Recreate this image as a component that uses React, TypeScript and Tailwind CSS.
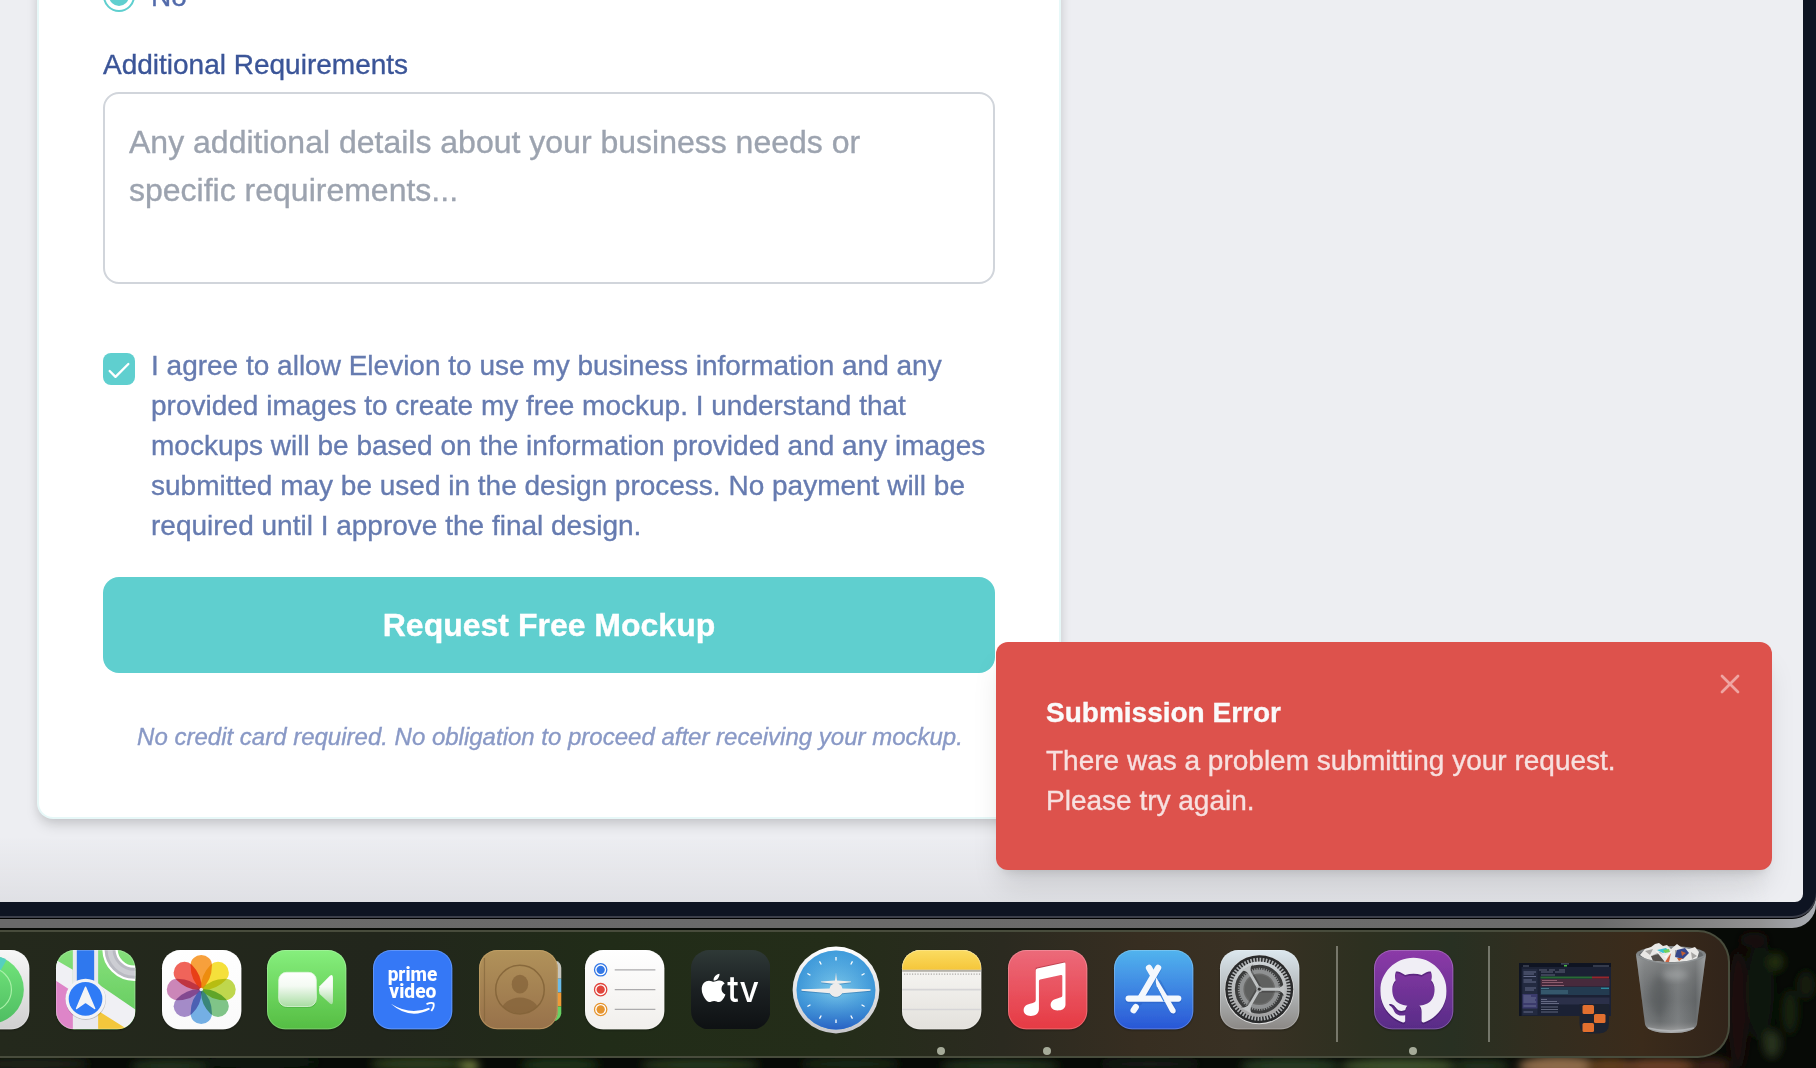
import React from "react";
import { FaApple } from "react-icons/fa";
import { SiGithub } from "react-icons/si";
import { Check, X } from "lucide-react";

const range = (n: number) => Array.from({ length: n }, (_, i) => i);

function Wallpaper() {
  const blobs: [number, number, number, number, string][] = [
    [30, 1064, 60, 8, "#1c2016"], [170, 1066, 40, 7, "#20301c"], [260, 1062, 60, 6, "#0f1a10"],
    [420, 1064, 50, 8, "#2a3a1c"], [470, 1066, 9, 6, "#6f7a3c"], [560, 1065, 40, 8, "#1b3318"],
    [700, 1065, 60, 7, "#25381f"], [850, 1064, 50, 6, "#1a2a17"], [1000, 1066, 60, 7, "#23301c"],
    [1150, 1064, 50, 6, "#141d12"], [1290, 1066, 50, 8, "#253a22"], [1400, 1066, 60, 8, "#3c4f2c"],
    [1480, 1066, 30, 7, "#22301a"], [1560, 1066, 42, 10, "#8d6b48"], [1610, 1066, 24, 9, "#5e3c1f"],
    [1660, 1066, 40, 8, "#6b4128"], [1710, 1066, 20, 8, "#3a2415"], [1738, 1010, 10, 60, "#1e0f0a"],
    [1760, 990, 14, 50, "#0f150b"], [1776, 962, 8, 9, "#222e0f"], [1772, 1044, 9, 14, "#26321a"],
    [1790, 1012, 8, 22, "#18240e"], [1806, 985, 9, 14, "#121a0b"], [1754, 940, 14, 8, "#150d09"],
  ];
  return (
    <svg className="absolute inset-0" width="1816" height="1068" aria-hidden="true">
      <defs>
        <filter id="soft" x="-30%" y="-30%" width="160%" height="160%"><feGaussianBlur stdDeviation="4" /></filter>
      </defs>
      <rect width="1816" height="1068" fill="#070a06" />
      <g filter="url(#soft)">
        {blobs.map(([x, y, rx, ry, c], i) => <ellipse key={i} cx={x} cy={y} rx={rx} ry={ry} fill={c} />)}
      </g>
    </svg>
  );
}

function Icon({ id, from, to, children }: { id: string; from: string; to: string; children?: React.ReactNode }) {
  return (
    <svg viewBox="0 0 80 80" className="h-[79.3px] w-[79.3px] shrink-0 overflow-visible">
      <defs>
        <linearGradient id={`g-${id}`} x2="0" y2="1"><stop stopColor={from} /><stop offset="1" stopColor={to} /></linearGradient>
        <clipPath id={`c-${id}`}><rect width="80" height="80" rx="18.5" /></clipPath>
        <filter id={`s-${id}`} x="-20%" y="-20%" width="140%" height="150%"><feDropShadow dx="0" dy="1" stdDeviation="1.2" floodOpacity=".35" /></filter>
      </defs>
      <rect width="80" height="80" rx="18.5" fill={`url(#g-${id})`} filter={`url(#s-${id})`} />
      <g clipPath={`url(#c-${id})`}>{children}</g>
      <rect x=".5" y=".5" width="79" height="79" rx="18" fill="none" stroke="#fff" strokeOpacity=".22" />
    </svg>
  );
}

const FindMy = () => (
  <Icon id="find" from="#f7f7f7" to="#cfcfcf">
    <circle cx="40" cy="40" r="34.5" fill="url(#findGreen)" />
    <defs><linearGradient id="findGreen" x2="0" y2="1"><stop stopColor="#72e57b" /><stop offset="1" stopColor="#4fbd62" /></linearGradient></defs>
    <path d="M40 40 48 6.500Q54 8 57 10Z" fill="#56cfc0" />
    <circle cx="40" cy="40" r="22" fill="none" stroke="#a9f0a8" strokeWidth="1.2" />
  </Icon>
);

const Maps = () => (
  <Icon id="maps" from="#86e07b" to="#5fc85a">
    <path d="M0 28 20 44V80H0Z" fill="#de85c8" />
    <path d="M42 56 74 80H42Z" fill="#f3c73c" />
    <circle cx="79" cy="-1" r="24.500" fill="none" stroke="#fff" strokeWidth="15.500" />
    <circle cx="79" cy="-1" r="24.500" fill="none" stroke="#b9bac2" strokeWidth="11" />
    <circle cx="79" cy="-1" r="24.500" fill="none" stroke="#cccdd3" strokeWidth="5" />
    <path d="M0 10 17 20V42L0 31Z M42 34 80 60V80H72L42 61Z" fill="#f0f0f4" />
    <rect x="17" width="25.500" height="80" fill="#e9e9ee" />
    <rect x="21" width="17.500" height="40" fill="#2f78ee" />
    <circle cx="30" cy="50" r="20.500" fill="#000" opacity=".18" />
    <circle cx="29.800" cy="49.300" r="20.300" fill="#f3f3f6" />
    <circle cx="29.800" cy="49.300" r="17" fill="#2f7bf6" />
    <path d="M29.800 37.500 39 59 29.800 52.500 20.800 59Z" fill="#f4f4f6" stroke="#f4f4f6" strokeWidth="1.500" strokeLinejoin="round" />
  </Icon>
);

const Photos = () => (
  <Icon id="photos" from="#ffffff" to="#fafafa">
    <g className="isolate">
      {["#f7a03c", "#f5e03b", "#bfd74d", "#80c488", "#74afe4", "#a48bc8", "#cb86b8", "#f0645a"].map((c, i) => (
        <path key={c} d="M39.600 40Q28.800 31 28.800 15.500A10.800 10.500 0 0 1 50.400 15.500Q50.400 31 39.600 40Z" fill={c} transform={`rotate(${i * 45} 39.600 39.800)`} className="mix-blend-multiply" />
      ))}
    </g>
    <circle cx="39.600" cy="39.800" r="1.800" fill="#fff" opacity=".85" />
  </Icon>
);

const FaceTime = () => (
  <Icon id="ft" from="#86ef7d" to="#55bd43">
    <defs><linearGradient id="cam" x2="0" y2="1"><stop stopColor="#fff" /><stop offset=".4" stopColor="#f4faf3" /><stop offset="1" stopColor="#a9dda3" /></linearGradient></defs>
    <rect x="12" y="23.500" width="38" height="35" rx="8" fill="#2f8f2a" opacity=".3" />
    <rect x="11.800" y="22.500" width="38" height="34.500" rx="8" fill="url(#cam)" stroke="#dff5dc" strokeWidth=".8" />
    <path d="M53 36.500 63.500 26Q66.500 24 66.500 28V52Q66.500 56 63.500 54L53 44.500Q51.800 40 53 36.500Z" fill="url(#cam)" />
  </Icon>
);

const PrimeVideo = () => (
  <Icon id="prime" from="#3478f6" to="#3478f6">
    <g fill="#fff" fontFamily="Roboto, 'Open Sans', sans-serif" fontWeight="800" fontSize="20.500">
      <text x="14.800" y="31" textLength="50" lengthAdjust="spacingAndGlyphs">prime</text>
      <text x="16.500" y="48.800" textLength="47.500" lengthAdjust="spacingAndGlyphs">video</text>
    </g>
    <path d="M18 54.200Q38 66.500 56.500 58.200L57.500 59.800Q37 71 18 54.200Z" fill="#fff" />
    <path d="M54 54.500Q59 52.600 61 53.800 62.200 57 58.800 61.500" fill="none" stroke="#fff" strokeWidth="1.900" />
  </Icon>
);

const Contacts = () => (
  <svg viewBox="0 0 84 80" className="-mr-[4px] h-[79.3px] w-[83.3px] shrink-0 overflow-visible">
    <defs><linearGradient id="book" x2="0" y2="1"><stop stopColor="#b1925a" /><stop offset="1" stopColor="#97714a" /></linearGradient></defs>
    <path d="M76 10Q83 12 83 18V29H76Z" fill="#c6c5bd" />
    <rect x="76" y="29" width="7" height="14" fill="#6cbbe8" />
    <rect x="76" y="43" width="7" height="14" fill="#f09a37" />
    <path d="M76 57H83V64Q82 70 76 72Z" fill="#69d163" />
    <rect width="79.500" height="80" rx="18.500" fill="url(#book)" />
    <rect x=".6" y=".6" width="78.300" height="78.800" rx="18" fill="none" stroke="#cba96d" strokeOpacity=".6" />
    <path d="M5.500 8V72" stroke="#7f6238" strokeOpacity=".6" strokeWidth="1.200" />
    <clipPath id="avatar"><circle cx="41.300" cy="40" r="24" /></clipPath>
    <g fill="#846339" fillOpacity=".75">
      <ellipse cx="41.300" cy="34.500" rx="8.300" ry="9.500" />
      <ellipse cx="41.300" cy="62" rx="19" ry="14" clipPath="url(#avatar)" />
    </g>
    <circle cx="41.300" cy="40" r="24.500" fill="none" stroke="#806036" strokeOpacity=".8" strokeWidth="1.500" />
  </svg>
);

const Reminders = () => (
  <Icon id="rem" from="#ffffff" to="#f1efec">
    {[["#3478e5", 20], ["#e0453b", 40], ["#e5942f", 60]].map(([c, y]) => (
      <g key={y}>
        <circle cx="15.800" cy={y} r="6.200" fill="#fff" stroke={c as string} strokeWidth="1.300" />
        <circle cx="15.800" cy={y} r="4.200" fill={c as string} />
        <path d={`M30 ${y}H71`} stroke="#acabad" strokeWidth="1.300" />
      </g>
    ))}
  </Icon>
);

const AppleTV = () => (
  <svg viewBox="0 0 80 80" className="h-[79.3px] w-[79.3px] shrink-0">
    <defs><linearGradient id="tvbg" x2="0" y2="1"><stop stopColor="#2f3937" /><stop offset=".5" stopColor="#1b2022" /><stop offset="1" stopColor="#0e1113" /></linearGradient></defs>
    <rect width="80" height="80" rx="18.500" fill="url(#tvbg)" />
    <FaApple x="6.500" y="22" size={32.5} color="#fff" />
    <text x="36.500" y="52" fontFamily="Inter, sans-serif" fontSize="37" fontWeight="500" fill="#fff" textLength="32" lengthAdjust="spacingAndGlyphs">tv</text>
  </svg>
);

const Safari = () => (
  <svg viewBox="-44 -44 88 88" className="-mx-[4.350px] h-[88px] w-[88px] shrink-0">
    <defs>
      <radialGradient id="sky"><stop stopColor="#7cc8ea" /><stop offset="1" stopColor="#3d96d8" /></radialGradient>
      <linearGradient id="rim" x2="0" y2="1"><stop stopColor="#fff" /><stop offset="1" stopColor="#c7c7cb" /></linearGradient>
      <linearGradient id="deep" x2="0" y2="1"><stop stopColor="#4aaee6" stopOpacity=".3" /><stop offset=".5" stopColor="#3d96d8" stopOpacity="0" /><stop offset="1" stopColor="#2a62c4" /></linearGradient>
    </defs>
    <circle r="43.400" fill="url(#rim)" />
    <circle r="39.500" fill="url(#sky)" />
    <circle r="39.500" fill="url(#deep)" />
    {range(12).filter((i) => i % 6 !== 3).map((i) => (
      <path key={i} d="M0-33V-29.500" stroke="#fff" strokeWidth="1.300" transform={`rotate(${i * 30})`} />
    ))}
    <path d="M-34.500-.8-6-1.500-5-4-1-6-15-7.800-15-8.600-1-9.500 0-17.500 1-9.500 15-8.600V-7.800L1-6 5-4 6-1.500 34.500-.8V.8L6 3.200A7 7 0 0 1-6 3.200L-34.500.8Z" fill="#20558c" opacity=".35" transform="translate(0 1)" />
    <path d="M-34.500-.8-6-1.500-5-4-1-6-15-7.800-15-8.600-1-9.500 0-17.500 1-9.500 15-8.600V-7.800L1-6 5-4 6-1.500 34.500-.8V.8L6 3.200A7 7 0 0 1-6 3.200L-34.500.8Z" fill="#f0eeec" />
    <circle r="6.700" fill="#eeeceb" />
  </svg>
);

const Notes = () => (
  <Icon id="notes" from="#fbfaf8" to="#e3e1dc">
    <defs><linearGradient id="yel" x2="0" y2="1"><stop stopColor="#fbdc62" /><stop offset="1" stopColor="#f5c63a" /></linearGradient></defs>
    <rect width="80" height="20" fill="url(#yel)" />
    <rect y="20" width="80" height="2" fill="#b5b2a9" />
    <path d="M2 24.300H80" stroke="#aaa8a5" strokeWidth="1.200" strokeDasharray="1.200 1.500" />
    <path d="M0 40H80M0 60H80" stroke="#d6d5d7" strokeWidth="1.600" />
  </Icon>
);

const Music = () => (
  <Icon id="music" from="#ec6a7a" to="#e63a43">
    <g transform="translate(0 -1)" fill="#8e1f2f" opacity=".45"><path d="M28 19 57.500 12.500V16L28 23Z" /></g>
    <path d="M28 20.500Q28 19 29.500 18.600L56 12.800Q58 12.400 58 14V55C58 59.500 54 61 50 61 45.500 61 43 58.500 43 55.500 43 51.500 46 49.500 50.500 48.600 54 48 54.800 47.500 54.800 45.500V26.500Q54.800 25 53.300 25.300L32.500 29.800Q31.200 30 31.200 31.500V59.500C31.200 64 27.500 66.500 23 66.500 18.500 66.500 15.800 64 15.800 61 15.800 57 18.500 55 23 54 27 53.200 28 52.500 28 50Z" fill="#fff" />
  </Icon>
);

const AppStore = () => (
  <Icon id="store" from="#52b4ee" to="#2956d6">
    <g stroke="#1c4cab" strokeOpacity=".3" strokeWidth="6.500" strokeLinecap="round" transform="translate(0 1.500)">
      <path d="M14.800 49H64.800M44.500 18 25.500 51M45 32 60 60.500" />
    </g>
    <g stroke="#f4f8fd" strokeWidth="6.300" strokeLinecap="round">
      <path d="M35.300 18 39 24.500" />
      <path d="M44.500 18 27 48" />
      <path d="M14.800 49H64.800" />
      <path d="M22 57.500 19.800 60.800" />
    </g>
    <path d="M42.500 27.500 62 60Q63 63 60.500 64 58 64.500 56.500 62L43 36.500Q41.500 32 42.500 27.500Z" fill="#f4f8fd" />
    <path d="M42.700 37 50.500 52" stroke="#3b84e2" strokeWidth="1.200" />
  </Icon>
);

const Settings = () => (
  <Icon id="set" from="#dce8ef" to="#8b8885">
    <defs><linearGradient id="steel" x2="0" y2="1"><stop stopColor="#cdd2d5" /><stop offset="1" stopColor="#a3a3a3" /></linearGradient></defs>
    <circle cx="39.600" cy="40" r="35" fill="#dedede" />
    <circle cx="39.600" cy="39.600" r="34.300" fill="#292a2b" />
    <circle cx="39.600" cy="39.600" r="29.500" fill="none" stroke="#aeb1b3" strokeWidth="4.500" strokeDasharray="1.650 1.440" />
    <circle cx="39.600" cy="39.600" r="26.300" fill="#3b3c3c" stroke="url(#steel)" strokeWidth="3.400" />
    <circle cx="39.600" cy="39.600" r="18" fill="#6a6a69" stroke="#8f9192" strokeWidth="4" />
    <circle cx="39.600" cy="39.600" r="20.600" fill="none" stroke="#8f9192" strokeWidth="2" strokeDasharray="1.200 1.200" />
    <circle cx="39.600" cy="39.600" r="14.500" fill="#5f605f" />
    {[0, 120, 240].map((a) => (
      <g key={a} transform={`rotate(${a} 39.600 39.600)`}>
        <path d="M39.600 38H60L64.500 34V46L60 41.800H39.600Z" fill="#30302f" opacity=".4" transform="translate(0 1)" />
        <path d="M39.600 38.200H58Q62 38 65 33.500V45.700Q62 41.200 58 41H39.600Z" fill="#bfc2c3" />
      </g>
    ))}
    <circle cx="39.600" cy="39.600" r="3" fill="#aaadae" />
    <circle cx="39.600" cy="39.600" r="1.500" fill="#333" />
  </Icon>
);

const GitHub = () => (
  <Icon id="gh" from="#8c3aa8" to="#582c87">
    <SiGithub x="6.300" y="8.800" size={67} color="rgba(53,23,90,0.45)" />
    <SiGithub x="6.300" y="7" size={67} color="#f0eef5" />
  </Icon>
);

const Minimized = () => (
  <svg viewBox="0 0 92 72" className="mt-[14px] h-[72px] w-[92px] shrink-0">
    <rect width="92" height="53" fill="#1b2134" />
    <path d="M0 0H92V4H0ZM0 4H2.500V53H0Z" fill="#0f1422" />
    <path d="M45 2.800H48" stroke="#4dbb45" strokeWidth="1.600" />
    <path d="M42 .9H50M4 3H10M74 3H90M20 7H28M30 7H36M40 7H46" stroke="#7b8298" strokeWidth=".7" />
    <rect x="3.500" y="6" width="15" height="46" fill="#232a40" />
    <rect x="3.500" y="31" width="15" height="14.500" fill="#3b3b6c" />
    <path d="M4.500 9H17M4.500 11H15M4.500 13.500H17M4.500 17H13M4.500 19H17M6 25H17M6 27H15M4.500 33H12M4.500 35H17M4.500 37H16M4.500 39H17M4.500 43H17M4.500 49H14" stroke="#747b9c" strokeWidth=".8" />
    <rect x="21.500" y="13.500" width="51.500" height="2" fill="#296b35" /><rect x="73" y="13.500" width="17" height="2" fill="#97272c" />
    <rect x="21.500" y="16" width="69" height="7.500" fill="#472a3c" />
    <path d="M23 17.500H38M23 19.500H44M23 22.500H45" stroke="#a06b7b" strokeWidth=".8" />
    <rect x="21.500" y="24" width="69" height="8" fill="#233b50" />
    <path d="M82 25.200H90" stroke="#33a4b6" strokeWidth="1.100" />
    <path d="M22 25.500H30M22 28H49M22 30H49" stroke="#5991a0" strokeWidth=".7" />
    <rect x="21.500" y="34.500" width="69" height="7" fill="#2b3049" />
    <path d="M22 9H34M36 9H46M22 12H36M22 36.500H28M22 38.500H38M22 40.500H40M22 44H39M22 46.500H39M22 49H39" stroke="#7d839b" strokeWidth=".7" />
    <path d="M60.500 41H90V60Q90 70.500 80 70.500H70.500Q60.500 70.500 60.500 60.500Z" fill="#1d2330" />
    <g fill="#e2702f"><rect x="63.500" y="42" width="11.500" height="9" rx="1.500" /><rect x="75" y="51" width="11.500" height="9" rx="1.500" /><rect x="63.500" y="60" width="11.500" height="9" rx="1.500" /></g>
  </svg>
);

const Trash = () => (
  <svg viewBox="0 0 72 92" className="mt-px h-[92px] w-[72px] shrink-0">
    <defs>
      <linearGradient id="can"><stop stopColor="#8d9193" /><stop offset=".12" stopColor="#777b7d" /><stop offset=".35" stopColor="#676b6d" /><stop offset=".6" stopColor="#7e8284" /><stop offset=".85" stopColor="#65696b" /><stop offset="1" stopColor="#9a9fa1" /></linearGradient>
      <linearGradient id="canv" x2="0" y2="1"><stop stopColor="#aaa" stopOpacity=".45" /><stop offset=".6" stopColor="#555" stopOpacity=".2" /><stop offset=".85" stopColor="#777" stopOpacity=".2" /><stop offset="1" stopColor="#bbb" stopOpacity=".8" /></linearGradient>
      <filter id="mist" x="-40%" y="-40%" width="180%" height="180%"><feGaussianBlur stdDeviation="3" /></filter>
    </defs>
    <path d="M1 12 10 82Q12 91 36 91T62 82L71 12Z" fill="url(#can)" />
    <path d="M1 12 10 82Q12 91 36 91T62 82L71 12Z" fill="url(#canv)" />
    <ellipse cx="36" cy="12.500" rx="35" ry="8.500" fill="#7f8385" />
    <ellipse cx="36" cy="13" rx="32" ry="7" fill="#66696b" />
    <path d="M5 13 10 7 16 5 20 2 24 1 28 4 32 3 36 7 42 2 46 5 54 7 60 5 64 10 62 17 55 19 40 20 22 20 12 18Z" fill="#e9e8e6" />
    <path d="M10 9 18 7 15 13ZM18 13 25 10 34 19 20 19ZM40 8 52 10 48 16 40 14ZM56 10 62 14 57 17Z" fill="#a6a5a3" />
    <path d="M16 14 24 12 30 20 18 19Z" fill="#55504c" />
    <path d="M22 8 31 6 34 9 28 11Z" fill="#3bc3d2" />
    <path d="M28 8 34 7 35 10 30 11Z" fill="#70d05b" />
    <path d="M33 13 36 11 34 20 30 20Z" fill="#cf6340" />
    <path d="M42 8 50 6 54 11 48 17 40 15Z" fill="#37478a" />
    <path d="M46 9 51 11 47 14ZM42 16 48 16 44 19Z" fill="#c46033" />
    <path d="M20 8 30 14 38 8 30 20Z" fill="#fbfbfa" opacity=".8" />
    <path d="M2 14Q20 21.500 36 21.500T70 14" fill="none" stroke="#8d9193" strokeWidth="1.500" />
    <ellipse cx="40" cy="33" rx="13" ry="5" fill="#c5c9ca" opacity=".35" filter="url(#mist)" />
    <ellipse cx="24" cy="54" rx="9" ry="20" fill="#4a4e50" opacity=".3" filter="url(#mist)" />
    <path d="M13 86Q36 92 59 86" fill="none" stroke="#c3c7c9" strokeOpacity=".6" strokeWidth="1.500" />
  </svg>
);

/** A dock slot; an open application shows a small dot below its icon. */
function Slot({ running, children }: { running?: boolean; children: React.ReactNode }) {
  return (
    <div className="relative flex shrink-0 items-center justify-center">
      {children}
      {running && <span className="absolute left-1/2 top-[97px] size-2 -translate-x-[5px] rounded-full bg-[#a6ab99]" />}
    </div>
  );
}

function Dock() {
  return (
    <nav className="relative mt-[2px] flex h-[128px] w-[1730px] items-start overflow-hidden rounded-r-[32px] border-y-2 border-r-2 border-[#484c3c] bg-[linear-gradient(90deg,#24291c_0%,#22261c_22%,#212c18_35%,#242d19_48%,#2b2a20_58%,#372e21_66%,#393124_72%,#2d3020_79%,#283022_84%,#342d1f_90%,#3b2b1b_95%,#31241a_100%)]">
      <div className="-ml-[50px] mt-[17px] flex h-[81px] shrink-0 items-center gap-[26.500px]">
        <Slot><FindMy /></Slot>
        <Slot><Maps /></Slot>
        <Slot><Photos /></Slot>
        <Slot><FaceTime /></Slot>
        <Slot><PrimeVideo /></Slot>
        <Slot><Contacts /></Slot>
        <Slot><Reminders /></Slot>
        <Slot><AppleTV /></Slot>
        <Slot><Safari /></Slot>
        <Slot running><Notes /></Slot>
        <Slot running><Music /></Slot>
        <Slot><AppStore /></Slot>
        <Slot><Settings /></Slot>
      </div>
      <span className="ml-[37px] mt-[14px] h-[96px] w-[2px] shrink-0 bg-[#77776a]" />
      <div className="ml-[36px] mt-[17px] flex h-[81px] items-center"><Slot running><GitHub /></Slot></div>
      <span className="ml-[35px] mt-[14px] h-[96px] w-[2px] shrink-0 bg-[#74766a]" />
      <div className="ml-[28.500px] mt-[17px]"><Minimized /></div>
      <div className="ml-[24px] mt-[9px]"><Trash /></div>
    </nav>
  );
}

function RequestForm() {
  return (
    <form className="relative ml-[37px] mt-[-20px] flex w-[1024px] flex-col rounded-b-[16px] border-x-2 border-b-2 border-[#e7f8f8] bg-white px-16 pb-16 shadow-[0_8px_14px_-2px_rgba(0,0,0,0.13),0_2px_10px_rgba(0,0,0,0.07)]">
      <label className="flex h-8 items-center gap-4">
        <span className="flex size-8 items-center justify-center rounded-full border-2 border-[#5fcfcf]">
          <span className="size-5 rounded-full bg-[#5fcfcf]" />
        </span>
        <span className="mt-px text-[28px] leading-none text-[#536bab]">No</span>
      </label>
      <label className="mt-[39px] text-[28px] leading-none text-[#3b5598]">Additional Requirements</label>
      <div className="mt-[13px] h-[192px] rounded-[16px] border-2 border-[#d1d5db] px-6 py-6 text-[32px] leading-[48px] text-[#9ca3af]">
        Any additional details about your business needs or<br />specific requirements...
      </div>
      <div className="mt-[62px] flex items-start gap-4">
        <span className="mt-[7px] flex size-8 shrink-0 items-center justify-center rounded-[8px] bg-[#5fcfcf]">
          <Check size={28} strokeWidth={2} className="mt-[3px] text-white" />
        </span>
        <p className="whitespace-nowrap text-[28px] leading-[40px] text-[#667bb0]">
          I agree to allow Elevion to use my business information and any<br />
          provided images to create my free mockup. I understand that<br />
          mockups will be based on the information provided and any images<br />
          submitted may be used in the design process. No payment will be<br />
          required until I approve the final design.
        </p>
      </div>
      <button type="button" className="mt-[31px] h-24 rounded-[16px] bg-[#5fcfcf] text-[32px] font-bold text-white">Request Free Mockup</button>
      <p className="mt-12 whitespace-nowrap pl-[2px] text-center text-[24px] italic leading-8 text-[#8999c6]">
        No credit card required. No obligation to proceed after receiving your mockup.
      </p>
    </form>
  );
}

function Toast() {
  return (
    <div role="alert" className="absolute left-[996px] top-[642px] flex h-[228px] w-[776px] items-center rounded-[12px] bg-[#dd524c] pl-[50px] pt-[2px] shadow-[0_20px_30px_-6px_rgba(0,0,0,0.12),0_8px_12px_-8px_rgba(0,0,0,0.16)]">
      <div className="flex flex-col gap-2 text-[28px] leading-[40px]">
        <strong className="font-bold text-[#fafafa]">Submission Error</strong>
        <p className="text-[#f7e0df]">There was a problem submitting your request.<br />Please try again.</p>
      </div>
      <X size={32} strokeWidth={2} className="absolute right-[26px] top-[26px] text-[#efa5a2]" />
    </div>
  );
}

export default function App() {
  return (
    <div className="relative h-[1068px] w-[1816px] overflow-hidden font-['Liberation_Sans',Arial,sans-serif]">
      <Wallpaper />
      <div className="relative h-[928px] rounded-br-[24px] bg-[linear-gradient(90deg,#696969_0%,#6b6b6b_88%,#929292_97%,#a9adb3_100%)] pb-[9px]">
        <div className="h-[919px] rounded-br-[24px] border-b border-black bg-[#3c3f4a] pb-[2px]">
          <div className="h-[916px] rounded-br-[24px] bg-[#0e1422]">
            <main className="relative h-[902px] w-[1803px] overflow-hidden rounded-br-[8px] bg-[#edeef2] [-webkit-text-stroke:0.35px]">
              <div className="absolute bottom-0 left-0 h-[64px] w-[1770px] bg-linear-to-b from-[#e0e1e5]/0 to-[#dfe0e4] [mask-image:linear-gradient(90deg,black_94%,transparent)]" />
              <RequestForm />
              <Toast />
            </main>
          </div>
        </div>
      </div>
      <Dock />
    </div>
  );
}
